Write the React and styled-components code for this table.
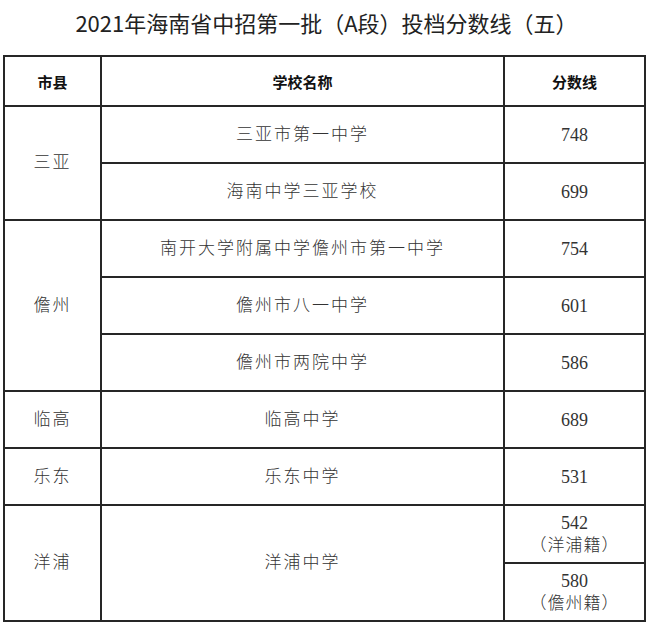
import React from "react";
import styled, { createGlobalStyle } from "styled-components";

const GlobalStyle = createGlobalStyle`
  html, body {
    margin: 0;
    padding: 0;
    background: #ffffff;
  }
`;

const Page = styled.div`
  width: 650px;
  padding: 0 0 0 3px;
  box-sizing: border-box;
`;

const Title = styled.h1`
  margin: 0 0 11px;
  height: 44px;
  line-height: 44px;
  text-align: center;
  font-family: "Noto Sans CJK SC", "Noto Sans", sans-serif;
  font-weight: 400;
  font-size: 22px;
  color: #222;
`;

const Table = styled.table`
  width: 641px;
  border-collapse: collapse;
  table-layout: fixed;
  font-family: "Liberation Serif", "Noto Sans CJK SC", serif;
  color: #333;
`;

const HeadCell = styled.th`
  height: 48px;
  border: 2px solid #262626;
  font-family: "Noto Sans CJK SC", "Noto Sans", sans-serif;
  font-weight: 700;
  font-size: 15px;
  color: #111;
  text-align: center;
  padding: 0;
`;

const Cell = styled.td`
  height: ${(p) => (p.$last ? 56 : 55)}px;
  border: 2px solid #262626;
  text-align: center;
  vertical-align: middle;
  padding: 0;
  font-size: ${(p) => (p.$num ? 18 : 17)}px;
  font-weight: 300;
  letter-spacing: ${(p) => (p.$num ? 0 : 2)}px;
  line-height: 22px;
`;

const Origin = styled.span`
  font-size: 17px;
  letter-spacing: 1px;
`;

const rows = [
  { city: "三亚", schools: [["三亚市第一中学", "748"], ["海南中学三亚学校", "699"]] },
  {
    city: "儋州",
    schools: [
      ["南开大学附属中学儋州市第一中学", "754"],
      ["儋州市八一中学", "601"],
      ["儋州市两院中学", "586"],
    ],
  },
  { city: "临高", schools: [["临高中学", "689"]] },
  { city: "乐东", schools: [["乐东中学", "531"]] },
];

export default function App() {
  return (
    <Page>
      <GlobalStyle />
      <Title>2021年海南省中招第一批（A段）投档分数线（五）</Title>
      <Table>
        <colgroup>
          <col style={{ width: "97px" }} />
          <col style={{ width: "403px" }} />
          <col style={{ width: "141px" }} />
        </colgroup>
        <thead>
          <tr>
            <HeadCell>市县</HeadCell>
            <HeadCell>学校名称</HeadCell>
            <HeadCell>分数线</HeadCell>
          </tr>
        </thead>
        <tbody>
          {rows.map((group) =>
            group.schools.map(([name, score], i) => (
              <tr key={name}>
                {i === 0 && <Cell rowSpan={group.schools.length}>{group.city}</Cell>}
                <Cell>{name}</Cell>
                <Cell $num>{score}</Cell>
              </tr>
            ))
          )}
          <tr>
            <Cell rowSpan={2}>洋浦</Cell>
            <Cell rowSpan={2}>洋浦中学</Cell>
            <Cell $num $last>
              542
              <br />
              <Origin>（洋浦籍）</Origin>
            </Cell>
          </tr>
          <tr>
            <Cell $num $last>
              580
              <br />
              <Origin>（儋州籍）</Origin>
            </Cell>
          </tr>
        </tbody>
      </Table>
    </Page>
  );
}
